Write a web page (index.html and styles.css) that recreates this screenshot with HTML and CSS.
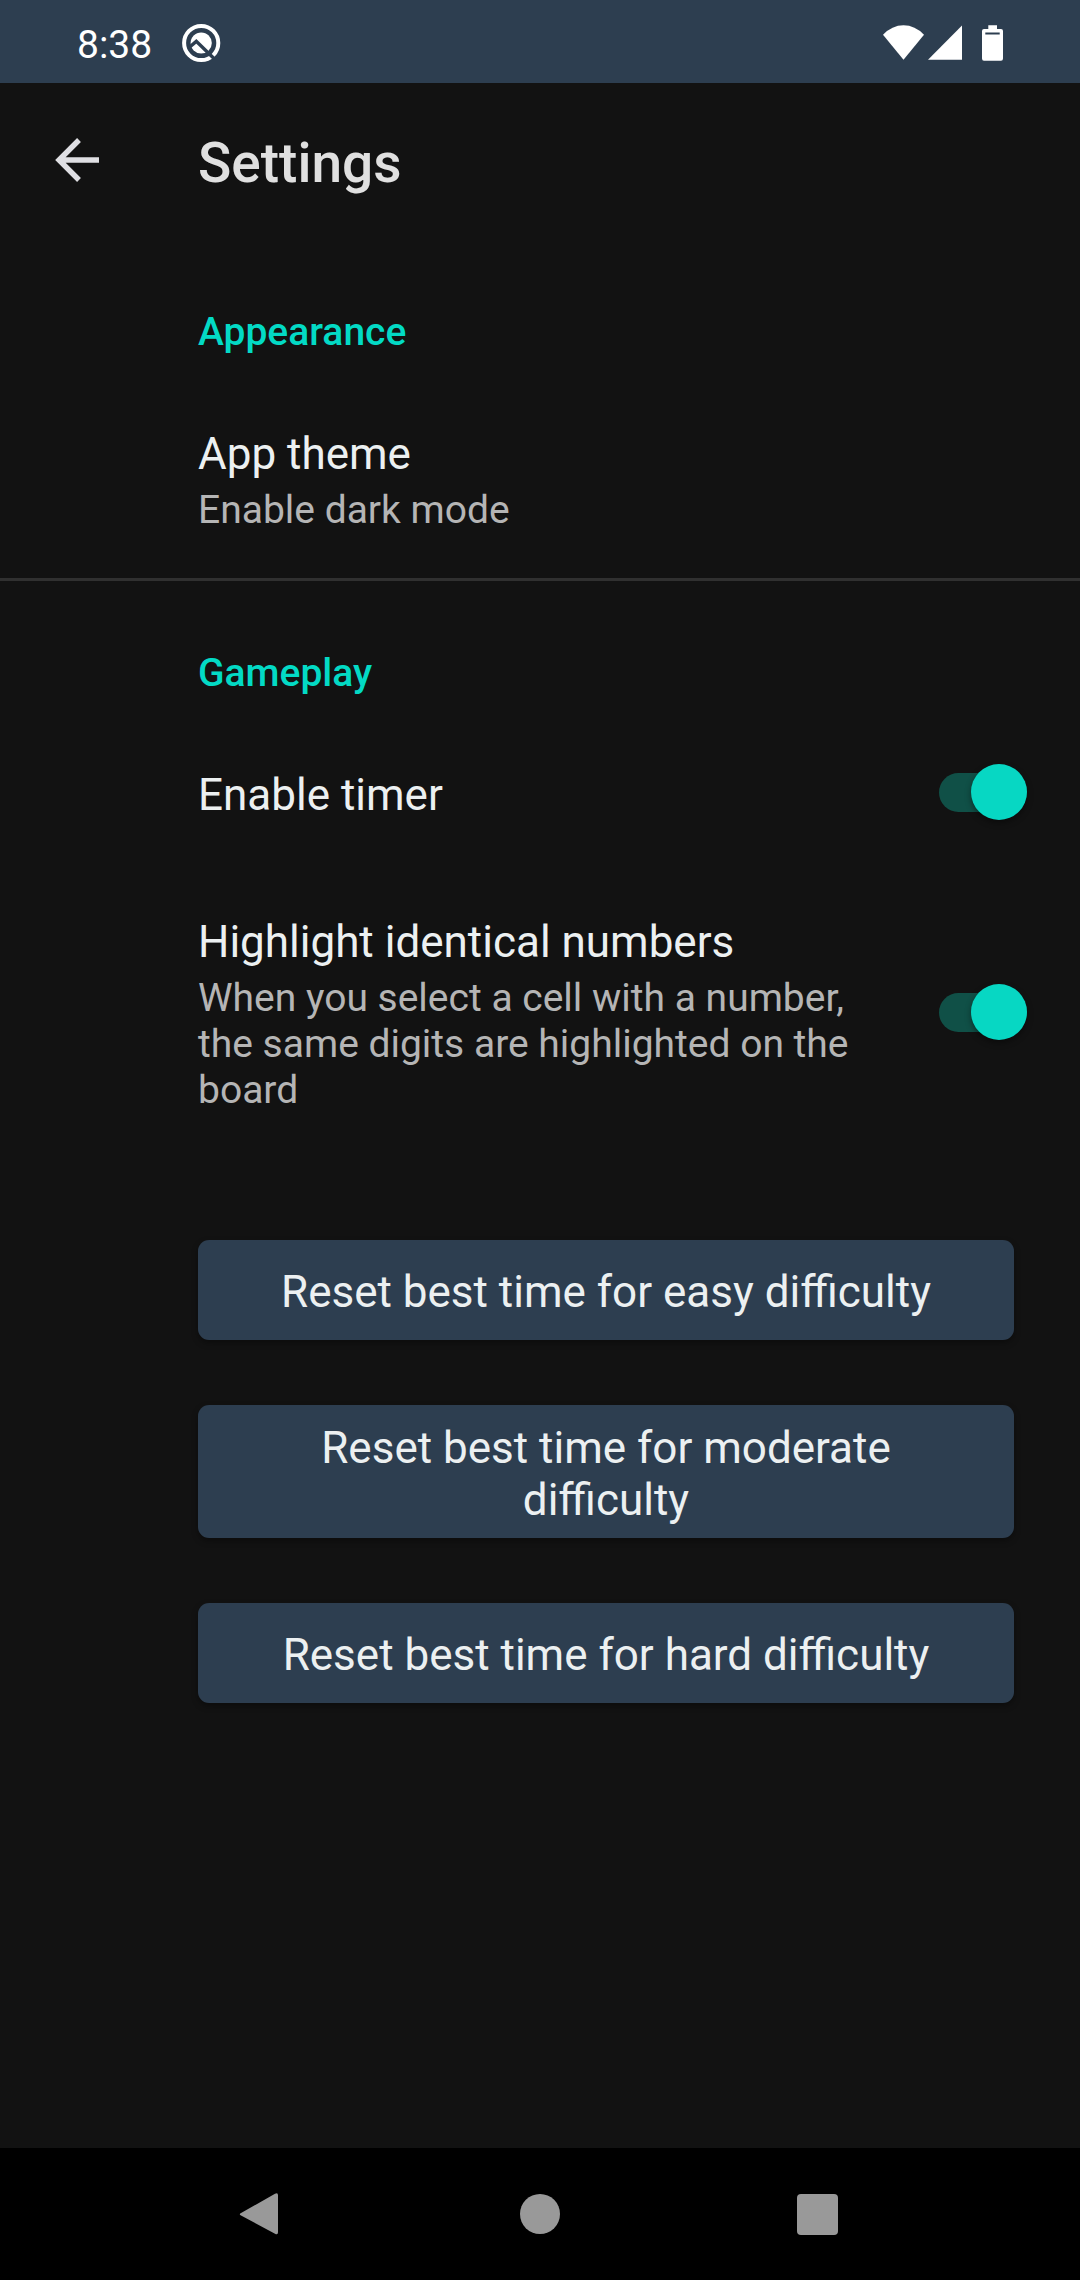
FILE: index.html
```html
<!DOCTYPE html>
<html lang="en">
<head>
<meta charset="utf-8">
<title>Settings</title>
<link rel="stylesheet" href="styles.css">
</head>
<body>
<header class="status">
  <span class="clock">8:38</span>
  <svg class="debug-icon" viewBox="0 0 40 40" width="40" height="40">
    <circle cx="20.2" cy="20" r="17.1" fill="none" stroke="#fff" stroke-width="4"/>
    <circle cx="20.2" cy="20" r="10.6" fill="#fff"/>
    <path d="M9 23.8 L15.3 18.4 L33 35.5" fill="none" stroke="#2d3e50" stroke-width="3.4"/>
  </svg>
  <svg class="system-icons" viewBox="0 0 122 40" width="122" height="40">
    <path fill="#fff" d="M0 11.8 Q9 2.3 20.5 2.3 Q32 2.3 41 11.8 L20.5 36.7Z"/>
    <path fill="#fff" d="M45 36.8 L79 2.6 V36.8Z"/>
    <path fill="#fff" fill-rule="evenodd" d="M105.3 2.2H114V6H118Q120 6 120 8V35.5Q120 37.7 118 37.7H101Q99 37.7 99 35.5V8Q99 6 101 6H105.3ZM102.3 9.5V11.6H116.7V9.5Z"/>
  </svg>
</header>
<div class="toolbar">
  <svg class="back" viewBox="0 0 44 44" width="44" height="44">
    <path d="M44 22H4M24 2L4 22L24 42" fill="none" stroke="#dfdfe3" stroke-width="5.4"/>
  </svg>
  <h1>Settings</h1>
</div>
<main>
  <section class="group appearance">
    <h2>Appearance</h2>
    <div class="pref">
      <div class="label"><h3>App theme</h3><p>Enable dark mode</p></div>
    </div>
  </section>
  <section class="group gameplay">
    <h2>Gameplay</h2>
    <div class="pref timer">
      <div class="label"><h3>Enable timer</h3></div>
      <span class="switch"><span class="thumb"></span></span>
    </div>
    <div class="pref highlight">
      <div class="label"><h3>Highlight identical numbers</h3><p>When you select a cell with a number, the same digits are highlighted on the board</p></div>
      <span class="switch"><span class="thumb"></span></span>
    </div>
    <div class="actions">
      <button class="reset">Reset best time for easy difficulty</button>
      <button class="reset">Reset best time for moderate difficulty</button>
      <button class="reset">Reset best time for hard difficulty</button>
    </div>
  </section>
</main>
<nav class="navbar">
  <svg viewBox="0 0 44 60" width="44" height="60"><path d="M3.5 28.8 L37 9.8 Q40 8.3 40 11.3 V48.3 Q40 51.3 37 49.8 L3.5 31.8 Q0 30.3 3.5 28.8Z" fill="#999"/></svg>
  <svg viewBox="0 0 44 60" width="44" height="60"><circle cx="22" cy="30" r="20" fill="#999"/></svg>
  <svg viewBox="0 0 44 60" width="44" height="60"><rect x="-1" y="10" width="41" height="41" rx="4" fill="#999"/></svg>
</nav>
</body>
</html>
```
FILE: styles.css
```css
* { box-sizing: border-box; margin: 0; }
body {
  display: flex;
  flex-direction: column;
  width: 1080px;
  height: 2280px;
  background: #121212;
  color: #ecf0f1;
  font-family: Roboto, sans-serif;
  font-size: 44px;
  line-height: 52px;
}
.status {
  display: flex;
  align-items: flex-start;
  height: 83px;
  padding: 23px 75px 0 77px;
  background: #2d3e50;
  color: #fff;
}
.clock { width: 104px; font-size: 39px; line-height: 44px; }
.system-icons { margin-left: auto; }
.toolbar { display: flex; gap: 99px; height: 154px; padding: 55px 0 0 55px; }
.back { flex: none; }
h1 { font-size: 55px; font-weight: 500; line-height: 64px; margin-top: -7px; color: #e0e0e0; }
h2 { padding-left: 198px; font-size: 39px; line-height: 46px; font-weight: 500; color: #03dac5; }
h3 { font-size: 44px; font-weight: 400; line-height: 52px; }
p { font-size: 39px; line-height: 46px; margin-top: 7px; color: #b5b5b5; }
.appearance { height: 344px; padding-top: 72px; border-bottom: 3px solid #303030; }
.gameplay { padding-top: 69px; }
.pref { display: flex; align-items: center; padding-left: 198px; padding-right: 53px; }
.appearance .pref { margin-top: 73px; }
.timer { height: 147px; margin-top: 25px; }
.highlight { height: 293px; }
.label { width: 680px; }
.switch {
  display: flex;
  align-items: center;
  justify-content: flex-end;
  width: 88px;
  height: 39px;
  margin-left: auto;
  margin-bottom: 5px;
  border-radius: 20px;
  background: #105047;
}
.thumb {
  width: 56px;
  height: 56px;
  flex: none;
  border-radius: 50%;
  background: #07d7c3;
  box-shadow: 0 3px 6px rgba(0, 0, 0, .4);
}
.actions { display: flex; flex-direction: column; gap: 65px; padding: 79px 66px 0 198px; }
.reset {
  min-height: 100px;
  padding: 16.6px 44px 12.4px;
  border: 0;
  border-radius: 11px;
  background: #2d3e50;
  box-shadow: 0 3px 6px rgba(0, 0, 0, .35);
  color: #ecf0f1;
  font: inherit;
}
.navbar {
  display: flex;
  justify-content: space-between;
  height: 132px;
  margin-top: auto;
  padding: 36px 238px 0;
  background: #000;
}
.navbar svg { overflow: visible; }
```
